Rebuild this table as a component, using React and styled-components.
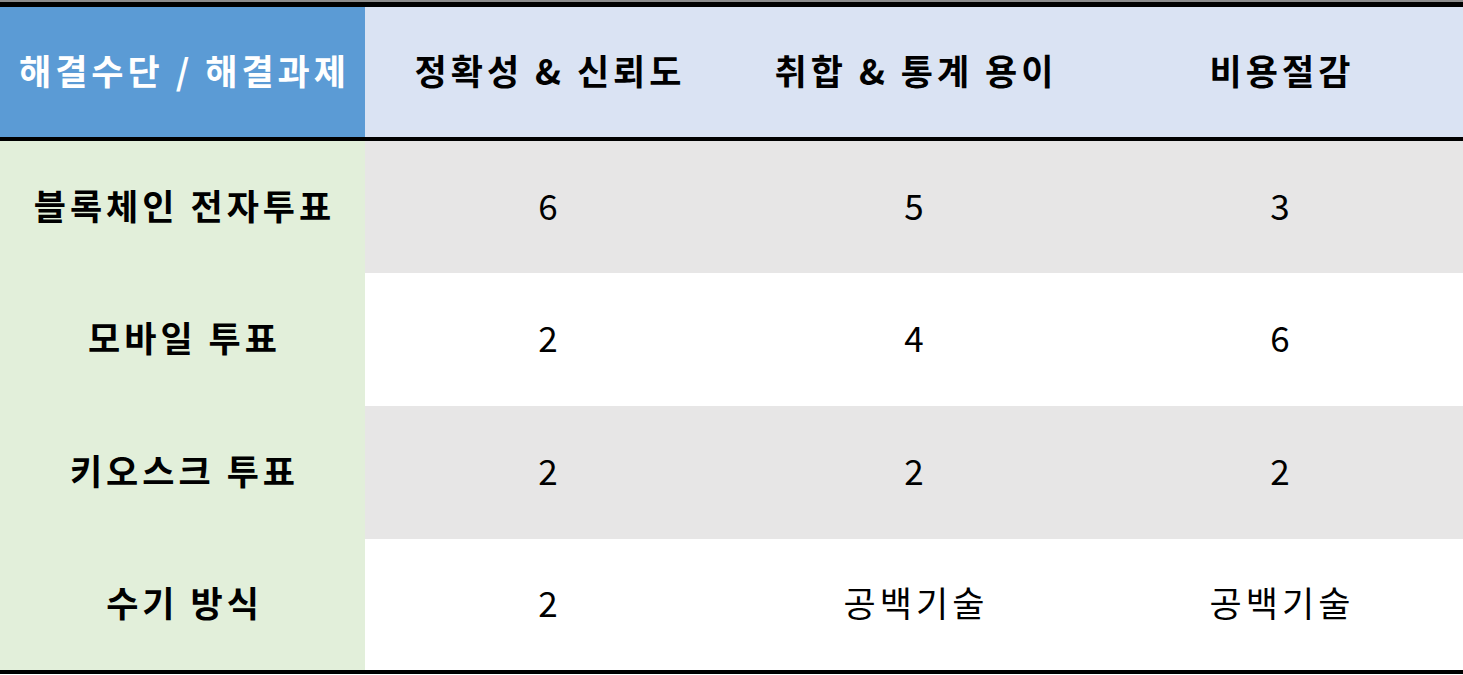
import React from 'react'
import styled, { createGlobalStyle } from 'styled-components'

const GlobalStyle = createGlobalStyle`
  html, body {
    margin: 0;
    padding: 0;
    background: #ffffff;
  }
  body {
    font-family: "Noto Sans CJK KR", "Noto Sans", sans-serif;
  }
`

const columns = ['정확성 & 신뢰도', '취합 & 통계 용이', '비용절감']

const rows = [
  { label: '블록체인 전자투표', values: ['6', '5', '3'], shaded: true },
  { label: '모바일 투표', values: ['2', '4', '6'], shaded: false },
  { label: '키오스크 투표', values: ['2', '2', '2'], shaded: true },
  { label: '수기 방식', values: ['2', '공백기술', '공백기술'], shaded: false },
]

const Page = styled.div`
  width: 1463px;
  height: 675px;
  padding-top: 2px;
  background: linear-gradient(#8c8c8c, #8c8c8c) top / 100% 2px no-repeat, #fff;
  box-sizing: border-box;
  overflow: hidden;
`

const Table = styled.div`
  display: grid;
  grid-template-columns: 365px repeat(3, 366px);
  grid-template-rows: 134px 132px 133px 133px 131px;
  border-top: 5px solid #000;
  border-bottom: 4px solid #000;
`

const Cell = styled.div`
  display: flex;
  align-items: center;
  justify-content: center;
  padding: 0 0 6px 4px;
  font-size: 35px;
  letter-spacing: 4px;
  color: #000;
  white-space: nowrap;
  background: ${p => p.$bg};
  font-weight: ${p => (p.$bold ? 700 : 400)};
`

const HeadCell = styled(Cell)`
  border-bottom: 4px solid #000;
  color: ${p => (p.$corner ? '#fff' : '#000')};
`

export default function App() {
  return (
    <Page>
      <GlobalStyle />
      <Table>
        <HeadCell $bg="#5b9bd5" $bold $corner>해결수단 / 해결과제</HeadCell>
        {columns.map(c => (
          <HeadCell key={c} $bg="#dae3f3" $bold>{c}</HeadCell>
        ))}
        {rows.map(r => (
          <React.Fragment key={r.label}>
            <Cell $bg="#e2efda" $bold>{r.label}</Cell>
            {r.values.map((v, i) => (
              <Cell key={i} $bg={r.shaded ? '#e7e6e6' : '#ffffff'}>{v}</Cell>
            ))}
          </React.Fragment>
        ))}
      </Table>
    </Page>
  )
}
